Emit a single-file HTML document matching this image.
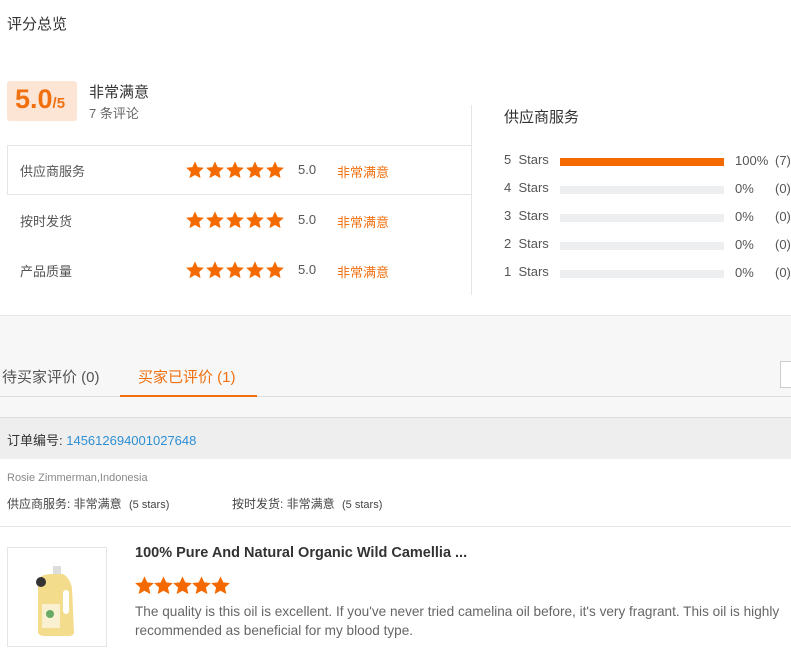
<!DOCTYPE html>
<html><head><meta charset="utf-8"><style>
*{margin:0;padding:0;box-sizing:border-box}
body{width:791px;height:645px;overflow:hidden;background:#fff;font-family:"Liberation Sans","Noto Sans CJK SC",sans-serif;color:#333;position:relative}
.a{position:absolute;white-space:nowrap}
.star{display:inline-block;width:18px;height:18px;margin-right:2px;vertical-align:top}
.bar{position:absolute;left:560px;width:164px;height:8px;background:#eceef0}
</style></head><body>
<div class="a" style="left:7px;top:13px;font-size:15px;color:#333">评分总览</div>
<div class="a" style="left:7px;top:81px;width:70px;height:40px;background:#fde5d6;border-radius:3px"></div>
<div class="a" style="left:15px;top:84px;font-size:27px;font-weight:bold;color:#f07010">5.0<span style="font-size:15px">/5</span></div>
<div class="a" style="left:89px;top:81px;font-size:15px;color:#333">非常满意</div>
<div class="a" style="left:89px;top:103px;font-size:13px;color:#666">7 条评论</div>
<div class="a" style="left:471px;top:105px;width:1px;height:190px;background:#e5e5e5"></div>
<div class="a" style="left:7px;top:145px;width:465px;height:50px;border:1px solid #e5e5e5;border-right:none"></div>
<div id="rows"></div>
<div class="a" style="left:504px;top:106px;font-size:15px;color:#333">供应商服务</div>
<div class="a" style="left:0;top:315px;width:791px;height:330px;background:#f7f7f7;border-top:1px solid #e8e8e8"></div>
<div class="a" style="left:2px;top:366px;font-size:15px;color:#555">待买家评价 (0)</div>
<div class="a" style="left:138px;top:366px;font-size:15px;color:#f07010">买家已评价 (1)</div>
<div class="a" style="left:0;top:396px;width:791px;height:1px;background:#ddd"></div>
<div class="a" style="left:120px;top:395px;width:137px;height:2px;background:#f07010"></div>
<div class="a" style="left:780px;top:361px;width:20px;height:27px;border:1px solid #ccc;background:#fff"></div>
<div class="a" style="left:0;top:417px;width:791px;height:42px;background:#eeeeee;border-top:1px solid #ddd"></div>
<div class="a" style="left:7px;top:430px;font-size:13px;color:#333">订单编号: <span style="color:#2d8fd5">145612694001027648</span></div>
<div class="a" style="left:0;top:459px;width:791px;height:186px;background:#fff"></div>
<div class="a" style="left:7px;top:472px;font-size:11px;color:#888">Rosie Zimmerman,Indonesia</div>
<div class="a" style="left:7px;top:495px;font-size:12px;color:#444">供应商服务: 非常满意 <span style="font-size:11px;margin-left:4px">(5 stars)</span></div>
<div class="a" style="left:232px;top:495px;font-size:12px;color:#444">按时发货: 非常满意 <span style="font-size:11px;margin-left:4px">(5 stars)</span></div>
<div class="a" style="left:0;top:526px;width:791px;height:1px;background:#e8e8e8"></div>
<div class="a" style="left:7px;top:547px;width:100px;height:100px;border:1px solid #e5e5e5;background:#fff">
<svg width="98" height="98" viewBox="0 0 98 98"><rect x="45" y="18" width="8" height="10" fill="#ddd"/><path d="M30 34 Q30 26 45 26 L55 26 Q62 30 64 40 L66 84 Q66 88 60 88 L38 88 Q30 88 30 84Z" fill="#f3dc8c"/><rect x="55" y="42" width="6" height="24" rx="3" fill="#fff"/><rect x="34" y="56" width="18" height="24" fill="#f8f0d0"/><circle cx="33" cy="34" r="5" fill="#333"/><circle cx="42" cy="66" r="4" fill="#6a6"/></svg></div>
<div class="a" style="left:135px;top:545px;font-size:14.5px;font-weight:bold;color:#333">100% Pure And Natural Organic Wild Camellia ...</div>
<div class="a" style="left:135px;top:576px" id="ps"></div>
<div class="a" style="left:135px;top:602px;font-size:13.6px;line-height:19px;color:#666;white-space:normal;width:656px">The quality is this oil is excellent. If you've never tried camelina oil before, it's very fragrant. This oil is highly recommended as beneficial for my blood type.</div>
<script>
const st='<svg class="star" viewBox="0 0 24 24"><path d="M12 0.5l3.5 7.6 8.3.9-6.2 5.6 1.8 8.2L12 18.6l-7.4 4.2 1.8-8.2L.2 9l8.3-.9z" fill="#f56a00"/></svg>';
let h='';[['供应商服务',170],['按时发货',220],['产品质量',270]].forEach(([t,y])=>{
h+=`<div class="a" style="left:20px;top:${y-9}px;font-size:13px;color:#555">${t}</div><div class="a" style="left:186px;top:${y-9}px">${st.repeat(5)}</div><div class="a" style="left:298px;top:${y-8}px;font-size:13px;color:#555">5.0</div><div class="a" style="left:337px;top:${y-8}px;font-size:13px;color:#f07010">非常满意</div>`;});
[5,4,3,2,1].forEach((n,i)=>{const y=160+i*28;
h+=`<div class="a" style="left:504px;top:${y-8}px;font-size:13px;color:#555">${n}&nbsp; Stars</div><div class="bar" style="top:${y-2}px;${n==5?'background:#f56a00':''}"></div><div class="a" style="left:735px;top:${y-7}px;font-size:13px;color:#555">${n==5?'100%':'0%'}</div><div class="a" style="left:775px;top:${y-7}px;font-size:13px;color:#555">(${n==5?7:0})</div>`;});
document.getElementById('rows').innerHTML=h;
document.getElementById('ps').innerHTML=st.repeat(5).replace(/class="star"/g,'class="star" style="width:19px;height:19px;margin-right:0"');
</script>
</body></html>
